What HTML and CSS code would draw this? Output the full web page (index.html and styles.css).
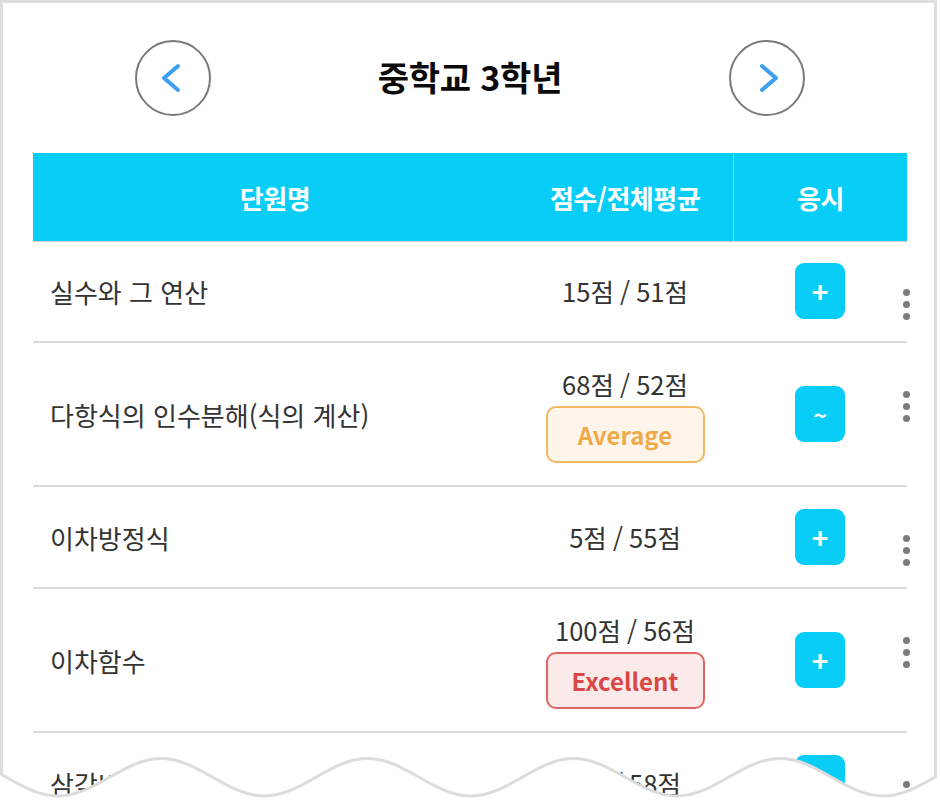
FILE: index.html
```html
<!DOCTYPE html>
<html lang="ko">
<head>
    <meta charset="UTF-8">
    <meta name="viewport" content="width=device-width, initial-scale=1.0">
    <title>단원별 성적</title>
    <link rel="stylesheet" href="styles.css">
</head>
<body>
    <div class="screen">
        <div class="frame">
            <!-- Grade selector -->
            <div class="grade-nav">
                <button class="nav-btn prev" aria-label="이전 학년">
                    <svg viewBox="0 0 20 30"><path d="M17 3 L3 15 L17 27"/></svg>
                </button>
                <h1 class="grade-title">중학교 3학년</h1>
                <button class="nav-btn next" aria-label="다음 학년">
                    <svg viewBox="0 0 20 30"><path d="M3 3 L17 15 L3 27"/></svg>
                </button>
            </div>

            <!-- Unit list -->
            <div class="unit-table">
                <div class="unit-head">
                    <div class="col-name">단원명</div>
                    <div class="col-score">점수/전체평균</div>
                    <div class="col-take">응시</div>
                </div>

                <div class="unit-row">
                    <div class="col-name">실수와 그 연산</div>
                    <div class="col-score"><span class="score-text">15점 / 51점</span></div>
                    <div class="col-take"><button class="take-btn">+</button></div>
                    <span class="kebab"><i></i><i></i><i></i></span>
                </div>

                <div class="unit-row">
                    <div class="col-name">다항식의 인수분해(식의 계산)</div>
                    <div class="col-score">
                        <span class="score-text">68점 / 52점</span>
                        <span class="badge average">Average</span>
                    </div>
                    <div class="col-take"><button class="take-btn tilde">~</button></div>
                    <span class="kebab"><i></i><i></i><i></i></span>
                </div>

                <div class="unit-row">
                    <div class="col-name">이차방정식</div>
                    <div class="col-score"><span class="score-text">5점 / 55점</span></div>
                    <div class="col-take"><button class="take-btn">+</button></div>
                    <span class="kebab"><i></i><i></i><i></i></span>
                </div>

                <div class="unit-row">
                    <div class="col-name">이차함수</div>
                    <div class="col-score">
                        <span class="score-text">100점 / 56점</span>
                        <span class="badge excellent">Excellent</span>
                    </div>
                    <div class="col-take"><button class="take-btn">+</button></div>
                    <span class="kebab"><i></i><i></i><i></i></span>
                </div>

                <div class="unit-row">
                    <div class="col-name">삼각비</div>
                    <div class="col-score"><span class="score-text">7점 / 58점</span></div>
                    <div class="col-take"><button class="take-btn">+</button></div>
                    <span class="kebab"><i></i><i></i><i></i></span>
                </div>
            </div>
        </div>

        <!-- torn bottom edge -->
        <svg class="tear" viewBox="0 740 937 60" width="937" height="60">
            <path class="tear-fill" d="M-45.15 758.5 C-7.6 758.5 20.45 796 58 796 C95.55 796 123.6 758.5 161.15 758.5 C198.7 758.5 226.75 796 264.3 796 C301.85 796 329.9 758.5 367.45 758.5 C405 758.5 433.05 796 470.6 796 C508.15 796 536.2 758.5 573.75 758.5 C611.3 758.5 639.35 796 676.9 796 C714.45 796 742.5 758.5 780.05 758.5 C817.6 758.5 845.65 796 883.2 796 C920.75 796 948.8 758.5 986.35 758.5 L986.35 810 L-45.15 810 Z"/>
            <path class="tear-line" d="M-45.15 758.5 C-7.6 758.5 20.45 796 58 796 C95.55 796 123.6 758.5 161.15 758.5 C198.7 758.5 226.75 796 264.3 796 C301.85 796 329.9 758.5 367.45 758.5 C405 758.5 433.05 796 470.6 796 C508.15 796 536.2 758.5 573.75 758.5 C611.3 758.5 639.35 796 676.9 796 C714.45 796 742.5 758.5 780.05 758.5 C817.6 758.5 845.65 796 883.2 796 C920.75 796 948.8 758.5 986.35 758.5"/>
        </svg>
    </div>
</body>
</html>
```

FILE: styles.css
```css
* {
    box-sizing: border-box;
}
body {
    margin: 0;
    background: #fff;
    font-family: "Noto Sans CJK KR", "Noto Sans", sans-serif;
    color: #333;
}
.screen {
    position: relative;
    width: 940px;
    height: 800px;
    overflow: hidden;
}
.frame {
    width: 937px;
    height: 800px;
    border: 3px solid #dedede;
    border-bottom: 0;
    padding: 37px 27px 0 30px;
}

/* grade selector */
.grade-nav {
    display: flex;
    align-items: center;
    justify-content: space-between;
    height: 76px;
    padding: 0 102px;
}
.nav-btn {
    width: 76px;
    height: 76px;
    padding: 0;
    border: 2px solid #7a7a7a;
    border-radius: 50%;
    background: #fff;
    display: flex;
    align-items: center;
    justify-content: center;
    cursor: pointer;
}
.nav-btn svg {
    width: 20px;
    height: 30px;
    fill: none;
    stroke: #3d9ff2;
    stroke-width: 4;
    stroke-linecap: round;
    stroke-linejoin: round;
}
.nav-btn.prev svg {
    margin-right: 4px;
}
.nav-btn.next svg {
    margin-left: 4px;
}
.grade-title {
    margin: 0 0 4px;
    font-size: 34px;
    font-weight: 700;
    letter-spacing: -0.2px;
    color: #0a0a0a;
}

/* table */
.unit-table {
    margin-top: 37px;
}
.unit-head,
.unit-row {
    display: grid;
    grid-template-columns: 484px 216px 174px;
}
.unit-head {
    height: 88px;
    background: #08cdf6;
    color: #fff;
    font-size: 26px;
    font-weight: 700;
    letter-spacing: -0.5px;
    box-shadow: 0 1px 1px rgba(0, 0, 0, 0.18);
}
.unit-head > div {
    display: flex;
    align-items: center;
    justify-content: center;
}
.unit-head .col-take {
    border-left: 1px solid rgba(255, 255, 255, 0.35);
}
.unit-row {
    position: relative;
    align-items: center;
    padding: 22px 0;
    border-bottom: 2px solid #dadada;
    font-size: 26px;
}
.unit-row .col-name {
    padding-left: 17px;
}
.unit-row .col-score {
    display: flex;
    flex-direction: column;
    align-items: center;
}
.score-text {
    font-size: 25.5px;
    line-height: 38px;
    word-spacing: -1px;
}
.badge {
    margin-top: 3px;
    width: 159px;
    height: 57px;
    border: 2px solid;
    border-radius: 10px;
    display: flex;
    align-items: center;
    justify-content: center;
    font-size: 24px;
    font-weight: 700;
}
.badge.average {
    border-color: #f3b862;
    background: #fdf5ea;
    color: #f0aa4a;
}
.badge.excellent {
    border-color: #e06464;
    background: #fbeaea;
    color: #d94848;
}
.unit-row .col-take {
    display: flex;
    justify-content: center;
}
.take-btn {
    width: 50px;
    height: 56px;
    padding: 0;
    border: 0;
    border-radius: 9px;
    background: #08cdf6;
    color: #fff;
    font-family: inherit;
    font-size: 28px;
    font-weight: 700;
    cursor: pointer;
}
.take-btn.tilde {
    font-size: 24px;
}
.kebab {
    position: absolute;
    top: 48px;
    right: -3px;
    display: flex;
    flex-direction: column;
    gap: 5px;
}
.kebab i {
    width: 7px;
    height: 7px;
    border-radius: 50%;
    background: #7b7b7b;
}

/* torn bottom edge */
.tear {
    position: absolute;
    left: 0;
    top: 740px;
}
.tear-fill {
    fill: #fff;
}
.tear-line {
    fill: none;
    stroke: #dcdcdc;
    stroke-width: 3;
}
```
